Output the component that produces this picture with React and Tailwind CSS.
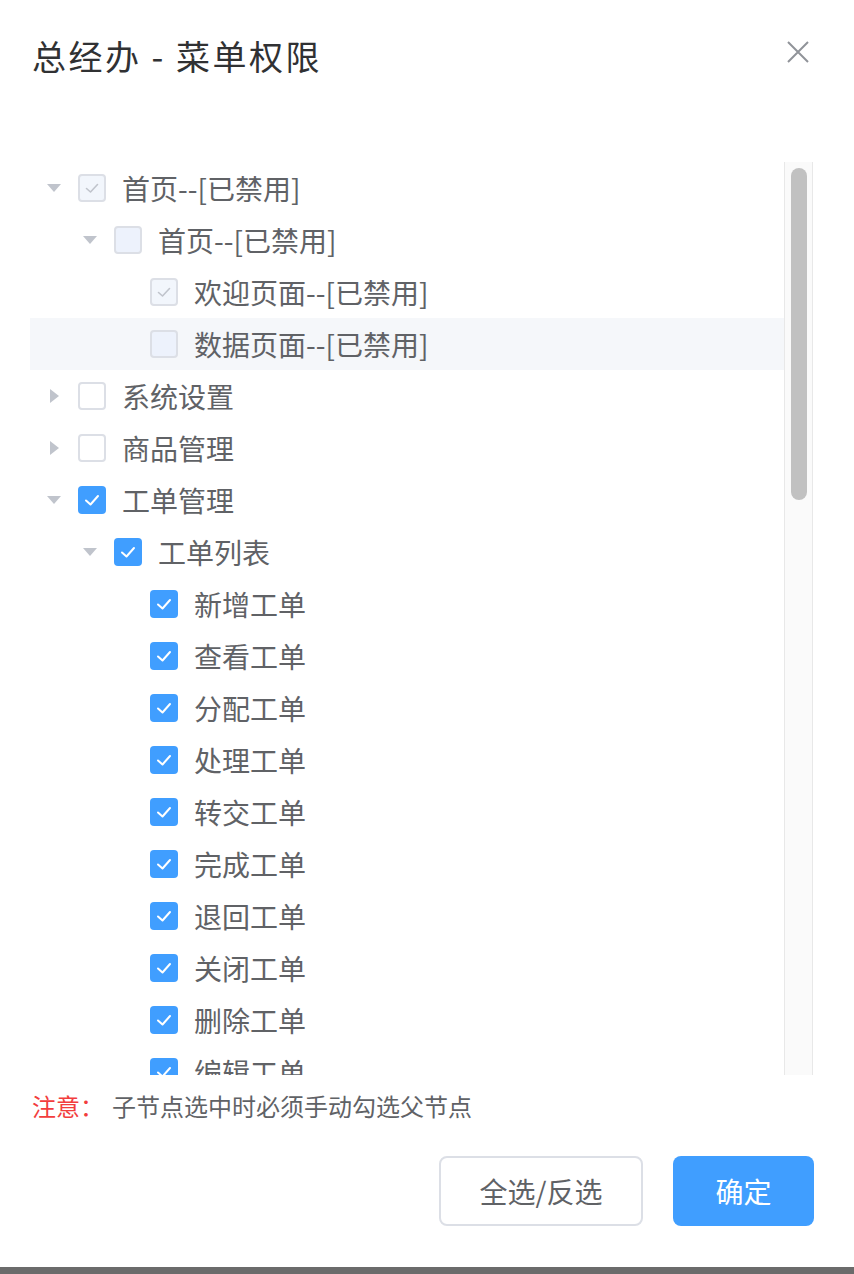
import React from "react";

const rows = [
  { level: 0, caret: "down", box: "disabledChecked", label: "首页--[已禁用]" },
  { level: 1, caret: "down", box: "disabled", label: "首页--[已禁用]" },
  { level: 2, caret: null, box: "disabledChecked", label: "欢迎页面--[已禁用]" },
  { level: 2, caret: null, box: "disabled", label: "数据页面--[已禁用]", active: true },
  { level: 0, caret: "right", box: "empty", label: "系统设置" },
  { level: 0, caret: "right", box: "empty", label: "商品管理" },
  { level: 0, caret: "down", box: "checked", label: "工单管理" },
  { level: 1, caret: "down", box: "checked", label: "工单列表" },
  { level: 2, caret: null, box: "checked", label: "新增工单" },
  { level: 2, caret: null, box: "checked", label: "查看工单" },
  { level: 2, caret: null, box: "checked", label: "分配工单" },
  { level: 2, caret: null, box: "checked", label: "处理工单" },
  { level: 2, caret: null, box: "checked", label: "转交工单" },
  { level: 2, caret: null, box: "checked", label: "完成工单" },
  { level: 2, caret: null, box: "checked", label: "退回工单" },
  { level: 2, caret: null, box: "checked", label: "关闭工单" },
  { level: 2, caret: null, box: "checked", label: "删除工单" },
  { level: 2, caret: null, box: "checked", label: "编辑工单" },
];

const padByLevel = ["pl-0", "pl-[36px]", "pl-[72px]"];

const Caret = ({ dir }) => {
  if (!dir) return null;
  if (dir === "down")
    return (
      <svg width="14" height="8" viewBox="0 0 14 8">
        <path d="M0 0 L14 0 L7 8 Z" fill="#c0c4cc" />
      </svg>
    );
  return (
    <svg width="9" height="14" viewBox="0 0 9 14">
      <path d="M0 0 L9 7 L0 14 Z" fill="#c0c4cc" />
    </svg>
  );
};

const CheckBox = ({ kind }) => {
  if (kind === "checked")
    return (
      <span className="flex h-[28px] w-[28px] items-center justify-center rounded-[4px] bg-[#409eff]">
        <svg width="28" height="28" viewBox="0 0 28 28">
          <path d="M8 14.5 L12.5 18.5 L20 10" fill="none" stroke="#fff" strokeWidth="2" strokeLinecap="round" strokeLinejoin="round" />
        </svg>
      </span>
    );
  if (kind === "disabledChecked")
    return (
      <span className="flex h-[28px] w-[28px] items-center justify-center rounded-[4px] border-2 border-[#dcdfe6] bg-[#f2f6fc]">
        <svg width="24" height="24" viewBox="0 0 24 24">
          <path d="M6.5 12.5 L10.5 16 L17.5 8.5" fill="none" stroke="#c0c4cc" strokeWidth="1.6" strokeLinecap="round" strokeLinejoin="round" />
        </svg>
      </span>
    );
  if (kind === "disabled")
    return <span className="block h-[28px] w-[28px] rounded-[4px] border-2 border-[#dcdfe6] bg-[#edf2fc]" />;
  return <span className="block h-[28px] w-[28px] rounded-[4px] border-2 border-[#dcdfe6] bg-white" />;
};

const TreeRow = ({ row }) => (
  <div
    className={`flex h-[52px] shrink-0 items-center ${padByLevel[row.level]} ${
      row.active ? "bg-[#f5f7fa]" : ""
    }`}
  >
    <span className="flex h-full w-[48px] items-center justify-center">
      <Caret dir={row.caret} />
    </span>
    <CheckBox kind={row.box} />
    <span className="ml-[16px] text-[28px] leading-none text-[#606266]">{row.label}</span>
  </div>
);

const App = () => {
  return (
    <div
      className="flex h-[1274px] w-[854px] flex-col bg-[#6b6b6b]"
      style={{ fontFamily: '"Noto Sans CJK SC", "Noto Sans", sans-serif' }}
    >
      <div className="flex h-[1267px] flex-col bg-white">
        <div className="flex items-start justify-between pl-[32px] pr-[44px] pt-[32px]">
          <h2 className="text-[34px] leading-[48px] tracking-[2.5px] text-[#303133]">总经办 - 菜单权限</h2>
          <svg className="mt-[8px]" width="24" height="24" viewBox="0 0 24 24">
            <path d="M2 2 L22 22 M22 2 L2 22" stroke="#909399" strokeWidth="2" />
          </svg>
        </div>

        <div className="ml-[30px] mr-[41px] mt-[82px] flex h-[913px]">
          <div className="flex flex-1 flex-col overflow-hidden">
            {rows.map((row, indx) => (
              <TreeRow key={indx} row={row} />
            ))}
          </div>
          <div className="flex w-[29px] justify-center border-x border-[#e8e8e8] bg-[#fafafa] pt-[6px]">
            <div className="h-[332px] w-[16px] rounded-full bg-[#c1c1c1]" />
          </div>
        </div>

        <div className="flex items-center pl-[32px] pt-[17px] text-[24px] leading-[28px]">
          <span className="text-[#f23d3d]">注意：</span>
          <span className="ml-[8px] text-[#606266]">子节点选中时必须手动勾选父节点</span>
        </div>

        <div className="flex justify-end gap-[30px] pr-[40px] pt-[36px]">
          <button className="h-[70px] w-[204px] rounded-[8px] border-2 border-[#dcdfe6] bg-white text-[28px] text-[#606266]">
            全选/反选
          </button>
          <button className="h-[70px] w-[141px] rounded-[8px] bg-[#409eff] text-[28px] text-white">
            确定
          </button>
        </div>
      </div>
    </div>
  );
};

export default App;
